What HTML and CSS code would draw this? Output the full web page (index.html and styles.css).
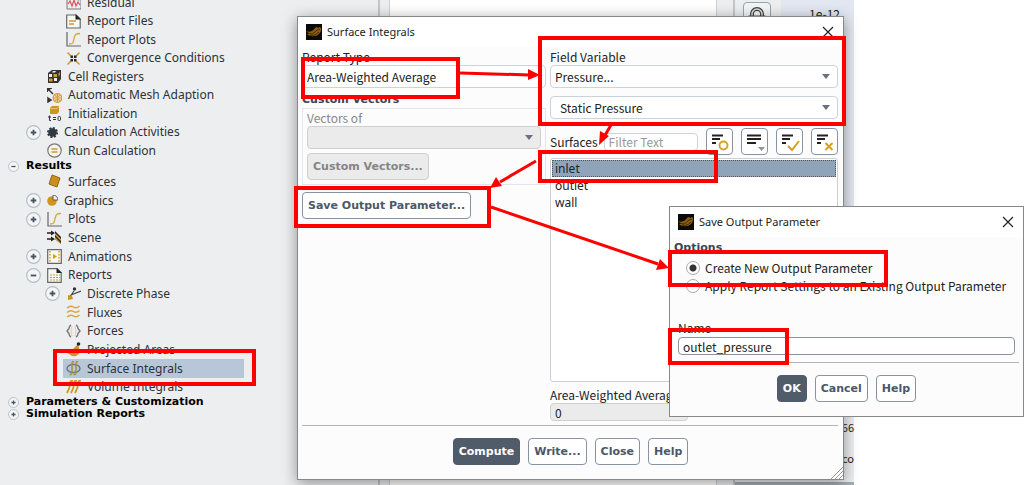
FILE: index.html
```html
<!DOCTYPE html>
<html lang="en">
<head>
    <meta charset="UTF-8">
    <meta name="viewport" content="width=device-width, initial-scale=1.0">
    <title>Surface Integrals</title>
    <link rel="stylesheet" href="styles.css">
</head>
<body>
    <!-- Shared shapes -->
    <svg class="defs" aria-hidden="true">
        <symbol id="plus" viewBox="0 0 15 15"><circle cx="7.5" cy="7.5" r="6.8" fill="#f3f5f7" stroke="#b4bdc6" stroke-width="1.2"/><path d="M4.7 7.5h5.6M7.5 4.7v5.6" stroke="#4a5563" stroke-width="1.8"/></symbol>
        <symbol id="minus" viewBox="0 0 15 15"><circle cx="7.5" cy="7.5" r="6.8" fill="#f3f5f7" stroke="#b4bdc6" stroke-width="1.2"/><path d="M4.7 7.5h5.6" stroke="#4a5563" stroke-width="1.8"/></symbol>
        <symbol id="curve" viewBox="0 0 15 15"><path d="M1 0v14h14" fill="none" stroke="#666" stroke-width="1.2"/><path d="M3 12c5 0 4-2 5-5.500s1-5 6-5" fill="none" stroke="#d9a441" stroke-width="1.300"/></symbol>
        <symbol id="logo" viewBox="0 0 16 16"><path d="M0 0h16v16H0z" fill="#0c0a06"/><path d="M0 7c2 1 4 1 6 0s3-4 5-4l1 1 2-1c2 2 1 5-1 7-3 3-9 3-12 0l2-.500z" fill="#8a5e12"/><path d="M2 9c4 2 6 0 8-2s3-2 4-1M4 11c3 1 6 0 9-3" fill="none" stroke="#2b1c04" stroke-width=".8"/></symbol>
        <symbol id="lines" viewBox="0 0 25 25"><path d="M5 6.500h11M5 10h8M5 14h4" stroke="#222" stroke-width="1.900"/></symbol>
    </svg>

    <main class="app">
        <div class="tree-pane">
            <nav class="tree" aria-label="Outline">
                <ul class="branch">
                    <li class="deep"><span class="slot"></span><a class="node" href="#"><svg class="icon" viewBox="0 0 15 15"><path d="M1 0v14h14V1" fill="none" stroke="#777"/><path d="M2 9l2-3 2 5 2-6 2 6 2-4 2 3" fill="none" stroke="#e0525c" stroke-width="1.200"/><circle cx="12.500" cy="4" r="1.500" fill="#3b9a70"/></svg>Residual</a></li>
                    <li class="deep"><span class="slot"></span><a class="node" href="#"><svg class="icon" viewBox="0 0 15 15"><path d="M.7 1h9.500l4 4v9H.7z" fill="#f7f7f7" stroke="#666" stroke-width="1.200"/><path d="M9.500 0v5.500H15z" fill="#222"/><path d="M3 7h7M3 10h5" stroke="#d29a2c" stroke-width="1.300"/></svg>Report Files</a></li>
                    <li class="deep"><span class="slot"></span><a class="node" href="#"><svg class="icon"><use href="#curve"/></svg>Report Plots</a></li>
                    <li class="deep"><span class="slot"></span><a class="node" href="#"><svg class="icon" viewBox="0 0 15 15"><path d="M1.500 1.500l3.500 3.500M13.500 1.500L10 5M1.500 13.500L5 10M13.500 13.500L10 10" stroke="#d29a2c" stroke-width="1.600"/><path d="M4.500 4.500h2.500v2.500H4.500zM8 4.500h2.500v2.500H8zM4.500 8h2.500v2.500H4.500zM8 8h2.500v2.500H8z" fill="#282828"/></svg>Convergence Conditions</a></li>
                    <li><span class="slot"></span><a class="node" href="#"><svg class="icon" viewBox="0 0 15 15"><path d="M1 4l4-3h9v9l-3 4H1z" fill="#333"/><path d="M2 5h3v3H2zM7 9h3v3H7zM6 2h3l-1 1.500H5z" fill="#eee"/><path d="M6.500 5h3.500v3H6.500zM2 9.500h3.500v3H2zM11.500 4.500L13 3v3l-1.500 1.500z" fill="#d29a2c"/></svg>Cell Registers</a></li>
                    <li><span class="slot"></span><a class="node" href="#"><svg class="icon" viewBox="0 0 15 15"><path d="M0 4V0h5M2 2l4 4M1 10l3 2-3 2z" stroke="#333" stroke-width="1.500" fill="#333"/><circle cx="10.500" cy="10" r="4.300" fill="#f3dfb6" stroke="#d29a2c" stroke-width="1.200"/><path d="M6 10h9M10.500 6v8M7.500 7.500q3 2 6 0M7.500 12.500q3-2 6 0" fill="none" stroke="#d29a2c"/></svg>Automatic Mesh Adaption</a></li>
                    <li><span class="slot"></span><a class="node" href="#"><svg class="icon" viewBox="0 0 15 15"><path d="M3 2l2-2h7v6l-2 2H3z" fill="#cf941d"/><path d="M3.500 2.500h6.500L12 .5" fill="none" stroke="#f0d18f" stroke-width=".8"/><path d="M2.500 9.500v5h1.500M1 11h3M6 11.500h3M6 13.500h3" fill="none" stroke="#333"/><rect x="11" y="10.500" width="2.500" height="4" rx="1" fill="none" stroke="#333"/></svg>Initialization</a></li>
                    <li><button class="toggle" aria-label="Expand"><svg><use href="#plus"/></svg></button><a class="node" href="#"><svg class="icon small" viewBox="0 0 11 11"><circle cx="5.500" cy="5.500" r="4.200" fill="#303840"/><circle cx="5.500" cy="5.500" r="4.500" fill="none" stroke="#303840" stroke-width="2" stroke-dasharray="2 1.500"/></svg>Calculation Activities</a></li>
                    <li><span class="slot"></span><a class="node" href="#"><svg class="icon" viewBox="0 0 15 15"><circle cx="7.500" cy="7.500" r="6.700" fill="#f6f3ea" stroke="#777" stroke-width="1.200"/><path d="M4.500 6h6M4.500 9h6" stroke="#d29a2c" stroke-width="1.500"/></svg>Run Calculation</a></li>
                </ul>
                <div class="root"><button class="toggle" aria-label="Collapse"><svg><use href="#minus"/></svg></button>Results</div>
                <ul class="branch results">
                    <li><span class="slot"></span><a class="node" href="#"><svg class="icon" viewBox="0 0 15 15"><path d="M5 1l8 3-3 9-8-3z" fill="#cc8f1b" stroke="#8f6517"/></svg>Surfaces</a></li>
                    <li><button class="toggle" aria-label="Expand"><svg><use href="#plus"/></svg></button><a class="node" href="#"><svg class="icon small" viewBox="0 0 11 11"><circle cx="5" cy="6" r="4.800" fill="#cf941d"/><path d="M6 5V0a5 5 0 0 1 5 5z" fill="#eee" stroke="#444" stroke-width=".8"/></svg>Graphics</a></li>
                    <li><button class="toggle" aria-label="Expand"><svg><use href="#plus"/></svg></button><a class="node" href="#"><svg class="icon"><use href="#curve"/></svg>Plots</a></li>
                    <li><span class="slot"></span><a class="node" href="#"><svg class="icon" viewBox="0 0 15 15"><path d="M0 3h5M0 9h5" stroke="#222" stroke-width="1.500"/><path d="M4 .5L8 3 4 5.500zM4 6.500L8 9l-4 2.500z" fill="#222"/><path d="M8 1l6 6v7L8 9z" fill="#222"/><path d="M8 3l6 6v2L8 5zM8 7l6 6v1L8 9z" fill="#dba52f"/></svg>Scene</a></li>
                    <li><button class="toggle" aria-label="Expand"><svg><use href="#plus"/></svg></button><a class="node" href="#"><svg class="icon" viewBox="0 0 15 15"><path d="M.7.7h13.600v13.600H.7z" fill="#fbf8f0" stroke="#666" stroke-width="1.200"/><path d="M3 2v11M12 2v11" stroke="#d29a2c" stroke-width="1.500" stroke-dasharray="1.500 1.500"/><path d="M6 5l4 2.500L6 10z" fill="#d29a2c"/></svg>Animations</a></li>
                    <li><button class="toggle" aria-label="Collapse"><svg><use href="#minus"/></svg></button><a class="node" href="#"><svg class="icon" viewBox="0 0 15 15"><path d="M.7.7h9.500l4 4v9.600H.7z" fill="#f7f7f7" stroke="#666" stroke-width="1.200"/><path d="M9.500 0v5H15z" fill="#222"/><path d="M3 7h10M3 9.500h10M3 12h10" stroke="#d29a2c" stroke-width="1.200" stroke-dasharray="2 1"/></svg>Reports</a></li>
                    <li class="deep"><button class="toggle" aria-label="Expand"><svg><use href="#plus"/></svg></button><a class="node" href="#"><svg class="icon" viewBox="0 0 15 15"><path d="M3 12l5-7M5 9l10-4" stroke="#444" stroke-width="1.200"/><circle cx="8.500" cy="3" r="1.700" fill="#333"/><path d="M2 9l4 1 1 3-5 1z" fill="#cf941d"/></svg>Discrete Phase</a></li>
                    <li class="deep"><span class="slot"></span><a class="node" href="#"><svg class="icon" viewBox="0 0 15 15"><path d="M1 3q3.500-3 6.500-1t6-1M1 7.500q3.500-3 6.500-1t6-1M1 12q3.500-3 6.500-1t6-1" fill="none" stroke="#d9a441" stroke-width="1.400"/></svg>Fluxes</a></li>
                    <li class="deep"><span class="slot"></span><a class="node" href="#"><svg class="icon" viewBox="0 0 15 15"><path d="M5 1Q3 2 3 4.500L1 7l2 2.500Q3 12 5 13" fill="none" stroke="#777" stroke-width="1.400"/><path d="M10 1q2 1 2 3.500L14 7l-2 2.500q0 2.500-2 3.500" fill="none" stroke="#777" stroke-width="1.400"/><path d="M6 2L5 7l1 5M9 2l1 5-1 5" fill="none" stroke="#ead2a0"/></svg>Forces</a></li>
                    <li class="deep"><span class="slot"></span><a class="node" href="#"><svg class="icon" viewBox="0 0 15 15"><path d="M0 10l7-3 5-5 2 8q-2 5-8 4z" fill="#cf941d"/><circle cx="12.500" cy="2" r="1.800" fill="#222"/></svg>Projected Areas</a></li>
                    <li class="deep"><span class="slot"></span><a class="node selected" href="#"><svg class="icon" viewBox="0 0 15 15"><ellipse cx="7.500" cy="7.500" rx="6.500" ry="4" fill="none" stroke="#68798a" stroke-width="1.400"/><path d="M8 .8Q6 0 6 3v8q0 3-2.500 2.500M12 .8Q10 0 10 3v8q0 3-2.500 2.500" fill="none" stroke="#a99337" stroke-width="1.500"/></svg>Surface Integrals</a></li>
                    <li class="deep"><span class="slot"></span><a class="node" href="#"><svg class="icon" viewBox="0 0 15 15"><path d="M7 1Q4 0 4 4t-3 9M11 1Q8 0 8 4t-3 9M15 1q-3-1-3 3t-3 9M2 5h12" fill="none" stroke="#d2931c" stroke-width="1.800"/></svg>Volume Integrals</a></li>
                </ul>
                <div class="root"><button class="toggle" aria-label="Expand"><svg><use href="#plus"/></svg></button>Parameters &amp; Customization</div>
                <div class="root"><button class="toggle" aria-label="Expand"><svg><use href="#plus"/></svg></button>Simulation Reports</div>
            </nav>
        </div>
        <div class="center-pane"><div class="sheet"></div></div>
        <div class="plot-pane">
            <div class="plot-top">
                <button class="lock" aria-label="Lock"><svg viewBox="0 0 20 20"><path d="M5 10V8a5 5 0 0 1 10 0v2" fill="none" stroke="#444" stroke-width="4"/><path d="M5 10V8a5 5 0 0 1 10 0v2" fill="none" stroke="#ddd" stroke-width="1.500"/><path d="M1.500 9.500h17v9h-17z" fill="#555"/><circle cx="10" cy="13" r="2.500" fill="#d29a2c"/></svg></button>
                <div class="plot">1e-12</div>
            </div>
            <div class="console"><span>66</span><span>co</span></div>
        </div>
    </main>

    <section class="dialog integrals">
        <header class="titlebar"><svg class="logo"><use href="#logo"/></svg><h1>Surface Integrals</h1>
            <button class="close" aria-label="Close window"><svg viewBox="0 0 12 12"><path d="M1 1l10 10M11 1L1 11" stroke="#222" stroke-width="1.200"/></svg></button></header>
        <div class="columns">
            <div class="left">
                <label for="report-type">Report Type</label>
                <select id="report-type" class="field"><option>Area-Weighted Average</option></select>
                <h2>Custom Vectors</h2>
                <div class="group">
                    <label for="vectors-of">Vectors of</label>
                    <div class="combo"><select id="vectors-of" class="field" disabled><option></option></select></div>
                    <button class="btn" disabled>Custom Vectors...</button>
                </div>
                <button class="btn">Save Output Parameter...</button>
            </div>
            <div class="right">
                <label for="field-variable">Field Variable</label>
                <div class="combo"><select id="field-variable" class="field"><option>Pressure...</option></select></div>
                <div class="combo second"><select class="field" aria-label="Pressure variable"><option>Static Pressure</option></select></div>
                <div class="filter">
                    <label for="filter-text">Surfaces</label>
                    <input id="filter-text" class="field" type="text" placeholder="Filter Text">
                    <div class="tools">
                        <button class="tool" aria-label="Toggle"><svg viewBox="0 0 25 25"><use href="#lines"/><circle cx="16.500" cy="16.500" r="4" fill="none" stroke="#d9a020" stroke-width="1.900"/></svg></button>
                        <button class="tool" aria-label="Sort"><svg viewBox="0 0 25 25"><path d="M5 6.500h14M5 10h14M5 14h9" stroke="#222" stroke-width="1.900"/><path d="M16 18h7l-3.500 4z" fill="#8d98a5"/></svg></button>
                        <button class="tool" aria-label="Select all"><svg viewBox="0 0 25 25"><use href="#lines"/><path d="M11 17l4 4 7-9" fill="none" stroke="#d9a020" stroke-width="2"/></svg></button>
                        <button class="tool" aria-label="Deselect all"><svg viewBox="0 0 25 25"><use href="#lines"/><path d="M13.500 14l7 7M20.500 14l-7 7" stroke="#d9a020" stroke-width="2"/></svg></button>
                    </div>
                </div>
                <select class="list" multiple aria-label="Surfaces"><option selected>inlet</option><option>outlet</option><option>wall</option></select>
                <label for="average">Area-Weighted Average</label>
                <input id="average" class="field result" type="text" value="0" readonly>
            </div>
        </div>
        <footer class="actions"><button class="btn primary">Compute</button><button class="btn">Write...</button><button class="btn">Close</button><button class="btn">Help</button></footer>
        <svg class="grip" viewBox="0 0 12 12"><path d="M0 12L12 0M4 12l8-8M8 12l4-4" stroke="#999"/></svg>
    </section>

    <section class="dialog output">
        <header class="titlebar"><svg class="logo"><use href="#logo"/></svg><h1>Save Output Parameter</h1>
            <button class="close" aria-label="Close window"><svg viewBox="0 0 12 12"><path d="M1 1l10 10M11 1L1 11" stroke="#222" stroke-width="1.200"/></svg></button></header>
        <div class="options">
            <h2>Options</h2>
            <label class="radio"><input type="radio" name="target" checked>Create New Output Parameter</label>
            <label class="radio"><input type="radio" name="target">Apply Report Settings to an Existing Output Parameter</label>
        </div>
        <div class="name">
            <label for="name">Name</label>
            <input id="name" class="field" type="text" value="outlet_pressure">
        </div>
        <footer class="actions"><button class="btn primary">OK</button><button class="btn">Cancel</button><button class="btn">Help</button></footer>
    </section>

    <!-- Step markers over the windows -->
    <svg class="marks" viewBox="0 0 1024 485" aria-hidden="true">
        <g fill="none" stroke="#fe0000" stroke-width="4">
            <path d="M303 59h155v38H303zM540 38h304v86H540zM540 152h176v29H540zM296 188h193v38H296zM55 351h199v33H55zM670 252h216v33H670zM670 330h117v33H670z"/>
            <path d="M460 73l70 2M611 125l-7 12M536 161l-36 21M491 207l167 57" stroke-width="3"/>
        </g>
        <path d="M540 75l-12 5v-11zM599 145l1-14 9 5zM490 188l6-11 6 9zM669 268l-13 2 4-11z" fill="#fe0000"/>
    </svg>
</body>
</html>
```
FILE: styles.css
```css
/* General */
* {
    box-sizing: border-box;
}

body {
    margin: 0;
    height: 100vh;
    overflow: hidden;
    position: relative;
    background: #fff;
    color: #222;
    font-family: "Noto Sans CJK JP", "Noto Sans", sans-serif;
    font-size: 12px;
    line-height: 16px;
}

button, input, select {
    font: inherit;
    color: inherit;
    margin: 0;
}

h1, h2, ul {
    margin: 0;
    padding: 0;
}

.defs {
    position: absolute;
    width: 0;
    height: 0;
}

/* Main window */
.app {
    display: flex;
    width: 854px;
    max-width: 100%;
    height: 100%;
    background: #eceef0;
}

.tree-pane {
    width: 378px;
    overflow: hidden;
}

.tree {
    width: 244px;
    margin-top: -7px;
    font-family: "Noto Sans", sans-serif;
}

.branch {
    list-style: none;
}

.branch li {
    display: flex;
    align-items: center;
    gap: 3px;
    height: 19px;
    padding-left: 26px;
}

.branch li:nth-child(even) {
    height: 18px;
}

.results li:nth-child(even) {
    height: 19px;
}

.results li:nth-child(3n) {
    height: 18px;
}

.branch li.deep {
    padding-left: 45px;
}

.slot {
    width: 15px;
}

.toggle {
    width: 15px;
    height: 15px;
    padding: 0;
    border: 0;
    background: none;
}

.toggle svg {
    display: block;
    width: 100%;
    height: 100%;
}

.node {
    display: flex;
    flex: 1;
    align-items: center;
    gap: 6px;
    height: 100%;
    padding: 0 3px;
    color: #2e3136;
    text-decoration: none;
    white-space: nowrap;
}

.node.selected {
    background: #b8c7d8;
}

.icon {
    width: 15px;
    height: 15px;
}

.icon.small {
    width: 11px;
    height: 11px;
}

.root {
    display: flex;
    align-items: center;
    gap: 7px;
    height: 12px;
    padding-left: 8px;
    color: #000;
    font-family: "DejaVu Sans", sans-serif;
    font-size: 11px;
    font-weight: 700;
    line-height: 12px;
    white-space: nowrap;
}

.root .toggle {
    width: 11px;
    height: 11px;
}

.center-pane {
    flex: 1;
    padding: 0 16px 0 9px;
    border: solid #c4c6c8;
    border-width: 0 2px;
}

.sheet {
    height: 100%;
    background: #fff;
    border: solid #d0d0d0;
    border-width: 0 1px;
}

.plot-pane {
    display: flex;
    flex-direction: column;
    width: 119px;
    border-bottom: 3px solid #a5adb6;
}

.plot-top {
    display: flex;
    justify-content: space-between;
    flex: 1;
    padding: 2px 0 0 8px;
}

.lock {
    width: 28px;
    height: 28px;
    padding: 3px;
    border: 1px solid #9aa5b1;
    border-radius: 4px;
    background: #f4f5f6;
}

.lock svg {
    display: block;
}

.plot {
    width: 73px;
    margin-top: -2px;
    padding: 6px 14px 0 0;
    background: #e3e7f1;
    text-align: right;
}

.console {
    display: flex;
    flex-direction: column;
    gap: 15px;
    padding: 4px 0 16px;
    text-align: right;
    font-size: 11px;
}

/* Dialogs */
.dialog {
    position: absolute;
    display: flex;
    flex-direction: column;
    border: 1px solid #888;
    background: #fcfcfc;
}

.integrals {
    left: 297px;
    top: 16px;
    width: 547px;
    height: 464px;
    box-shadow: 0 3px 14px rgba(0, 0, 0, 0.4);
}

.output {
    left: 669px;
    top: 206px;
    width: 355px;
    height: 211px;
}

.titlebar {
    display: flex;
    align-items: center;
    gap: 5px;
    height: 30px;
    padding: 0 9px 0 8px;
    background: #fff;
}

.titlebar h1 {
    flex: 1;
    font-family: "Noto Sans", sans-serif;
    font-size: 11px;
    font-weight: 400;
}

.logo {
    width: 16px;
    height: 16px;
}

.close {
    width: 12px;
    height: 12px;
    padding: 0;
    border: 0;
    background: none;
}

.close svg {
    display: block;
}

.dialog h2 {
    color: #3a4552;
    font-family: "DejaVu Sans", sans-serif;
    font-size: 11px;
    line-height: 16px;
}

.columns {
    display: flex;
    gap: 4px;
    flex: 1;
    margin: 0 5px 0 4px;
    padding-top: 2px;
    border-bottom: 1px solid #b5b5b5;
}

.left {
    width: 244px;
}

.right {
    display: flex;
    flex: 1;
    flex-direction: column;
}

.left > label, .right > label {
    display: block;
}

.field {
    display: block;
    width: 100%;
    height: 23px;
    padding: 0 4px;
    border: 1px solid #ccd3dc;
    border-radius: 4px;
    background: #fff;
    appearance: none;
}

.field:disabled {
    border-color: #cfcfcf;
    background: #ebebeb;
    opacity: 1;
}

.left h2 {
    margin-top: 4px;
}

.group {
    margin-bottom: 7px;
    padding: 1px 4px 4px;
    border: 1px solid #e1e4ec;
    color: #888;
}

.combo {
    position: relative;
}

.combo::after {
    content: "";
    position: absolute;
    right: 8px;
    top: 9px;
    border: 4px solid transparent;
    border-top: 5px solid #68727e;
    border-bottom: 0;
    pointer-events: none;
}

.second {
    margin-top: 8px;
}

.second .field {
    padding-left: 9px;
}

.btn {
    height: 27px;
    padding: 0 5px;
    border: 1px solid #8793a2;
    border-radius: 4px;
    background: #fff;
    color: #4b5868;
    font-family: "DejaVu Sans", sans-serif;
    font-size: 11px;
    font-weight: 700;
}

.btn:disabled {
    border-color: #cfcfcf;
    background: #ebebeb;
    color: #858585;
}

.group .btn {
    margin-top: 4px;
}

.primary {
    border-color: #505c6a;
    background: #505c6a;
    color: #fff;
}

.filter {
    display: flex;
    align-items: center;
    gap: 6px;
    margin: 9px 0 3px;
}

.filter .field {
    flex: 1;
    min-width: 0;
    height: 18px;
}

.filter .field::placeholder {
    color: #999;
}

.tools {
    display: flex;
    gap: 8px;
    margin-left: 2px;
}

.tool {
    width: 27px;
    height: 27px;
    padding: 0;
    border: 1px solid #8793a2;
    border-radius: 4px;
    background: #fff;
}

.tool svg {
    display: block;
}

.list {
    flex: 1;
    padding: 1px;
    border: 1px solid #ccd0d6;
    border-radius: 3px;
    background: #fff;
    font-family: "Noto Sans", sans-serif;
    overflow: hidden;
}

.list option {
    min-height: 17px;
    padding: 0 3px;
    line-height: 17px;
}

.list option:checked {
    background: linear-gradient(#8fa4b9, #8fa4b9);
    color: #222;
    outline: 1px dotted #555;
    outline-offset: -1px;
}

.right .list + label {
    margin-top: 5px;
}

.result {
    width: 138px;
    height: 18px;
    margin-bottom: 4px;
    border-color: #cfcfcf;
    background: #ebebeb;
}

.actions {
    display: flex;
    justify-content: center;
    gap: 8px;
    padding: 12px 0 14px;
}

.grip {
    position: absolute;
    right: 0;
    bottom: 0;
    width: 12px;
    height: 12px;
}

/* Save Output Parameter */
.options {
    padding: 3px 4px 0;
}

.radio {
    display: flex;
    align-items: center;
    gap: 5px;
    height: 18px;
    padding-left: 12px;
    white-space: nowrap;
}

.options h2 {
    margin-bottom: 3px;
}

.radio input {
    width: 14px;
    height: 14px;
    border: 1px solid #aaa;
    border-radius: 50%;
    background: #fff;
    appearance: none;
}

.radio input:checked {
    background: radial-gradient(#333 3px, #fff 4px);
}

.name {
    flex: 1;
    display: flex;
    flex-direction: column;
    justify-content: flex-end;
    margin: 0 4px;
    padding: 0 4px 7px;
    border-bottom: 1px solid #b5b5b5;
}

.name label {
    line-height: 18px;
}

.name .field {
    height: 18px;
    border-color: #8793a2;
}

/* Marks */
.marks {
    position: absolute;
    left: 0;
    top: 0;
    width: 1024px;
    height: 485px;
    pointer-events: none;
}
```
